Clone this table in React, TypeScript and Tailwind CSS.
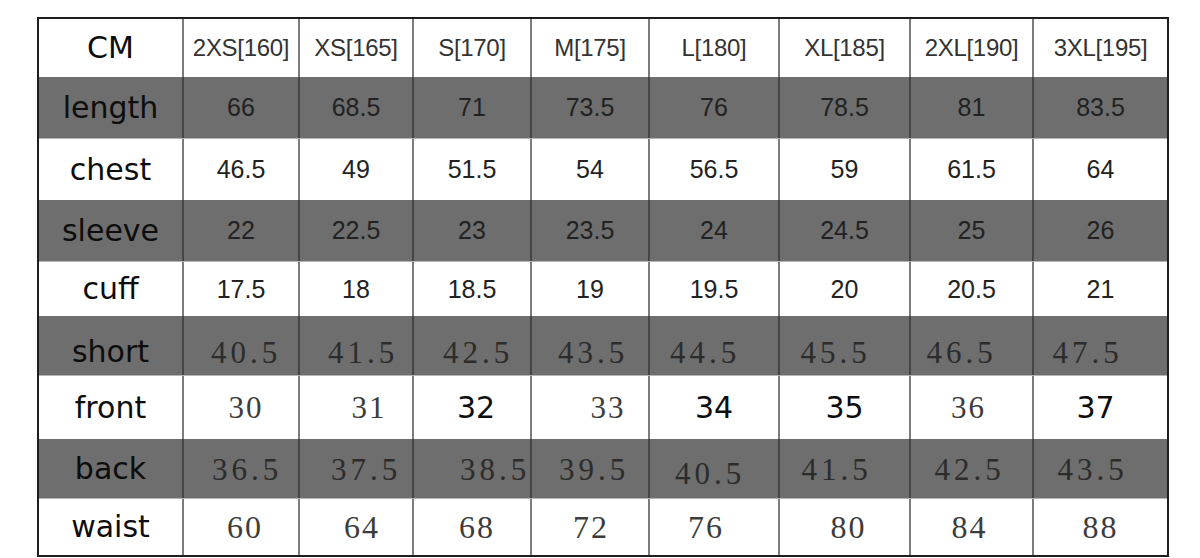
import React from "react";

type Cell = { t: string; c: string };
type Row = { label: string; dark: boolean; h: string; lc?: string; cells: Cell[] };

const HEAD = "font-['Liberation_Sans',Arial,sans-serif] text-[24px] tracking-[-0.3px] text-[#333333]";
const NUM = "font-['Liberation_Sans',Arial,sans-serif] text-[25px] text-[#222222]";
const SERD = "font-['Liberation_Serif','Times_New_Roman',serif] text-[31px] tracking-[4px]";
const SERI = "font-['Liberation_Serif','Times_New_Roman',serif] text-[31px] tracking-[2px] text-[#3c3c3c]";
const SERW = "font-['Liberation_Serif','Times_New_Roman',serif] text-[32px] tracking-[2px] text-[#3c3c3c]";
const DV = "font-['DejaVu_Sans',Verdana,sans-serif] text-[30px] text-[#0d0d0d]";

const rows: Row[] = [
  {
    label: "CM",
    dark: false,
    h: "h-[58px]",
    cells: ["2XS[160]", "XS[165]", "S[170]", "M[175]", "L[180]", "XL[185]", "2XL[190]", "3XL[195]"].map((t) => ({ t, c: HEAD })),
  },
  {
    label: "length",
    dark: true,
    h: "h-[61px]",
    cells: ["66", "68.5", "71", "73.5", "76", "78.5", "81", "83.5"].map((t) => ({ t, c: NUM })),
  },
  {
    label: "chest",
    dark: false,
    h: "h-[62px]",
    cells: ["46.5", "49", "51.5", "54", "56.5", "59", "61.5", "64"].map((t) => ({ t, c: NUM })),
  },
  {
    label: "sleeve",
    dark: true,
    h: "h-[61px]",
    cells: ["22", "22.5", "23", "23.5", "24", "24.5", "25", "26"].map((t) => ({ t, c: NUM })),
  },
  {
    label: "cuff",
    dark: false,
    h: "h-[55px]",
    cells: ["17.5", "18", "18.5", "19", "19.5", "20", "20.5", "21"].map((t) => ({ t, c: NUM })),
  },
  {
    label: "short",
    dark: true,
    h: "h-[59px]",
    lc: "pt-[12px]",
    cells: [
      { t: "40.5", c: `${SERD} text-[#2c2c2c] pl-[10px] pt-[14px]` },
      { t: "41.5", c: `${SERD} text-[#2c2c2c] pl-[14px] pt-[14px]` },
      { t: "42.5", c: `${SERD} text-[#2c2c2c] pl-[12px] pt-[14px]` },
      { t: "43.5", c: `${SERD} text-[#2c2c2c] pl-[6px] pt-[14px]` },
      { t: "44.5", c: `${SERD} text-[#2c2c2c] pr-[18px] pt-[14px]` },
      { t: "45.5", c: `${SERD} text-[#2c2c2c] pr-[18px] pt-[14px]` },
      { t: "46.5", c: `${SERD} text-[#2c2c2c] pr-[20px] pt-[14px]` },
      { t: "47.5", c: `${SERD} text-[#2c2c2c] pr-[26px] pt-[14px]` },
    ],
  },
  {
    label: "front",
    dark: false,
    h: "h-[64px]",
    cells: [
      { t: "30", c: `${SERI} pl-[10px]` },
      { t: "31", c: `${SERI} pl-[26px]` },
      { t: "32", c: `${DV} pl-[8px]` },
      { t: "33", c: `${SERI} pl-[36px]` },
      { t: "34", c: `${DV}` },
      { t: "35", c: `${DV}` },
      { t: "36", c: `${SERI} pr-[6px]` },
      { t: "37", c: `${DV} pr-[10px]` },
    ],
  },
  {
    label: "back",
    dark: true,
    h: "h-[59px]",
    cells: [
      { t: "36.5", c: `${SERD} text-[#2c2c2c] pl-[12px] pt-[2px]` },
      { t: "37.5", c: `${SERD} text-[#2c2c2c] pl-[20px] pt-[2px]` },
      { t: "38.5", c: `${SERD} text-[#2c2c2c] pl-[46px] pt-[2px]` },
      { t: "39.5", c: `${SERD} text-[#2c2c2c] pl-[8px] pt-[2px]` },
      { t: "40.5", c: `${SERD} text-[#2c2c2c] pr-[8px] pt-[10px]` },
      { t: "41.5", c: `${SERD} text-[#2c2c2c] pr-[16px] pt-[2px]` },
      { t: "42.5", c: `${SERD} text-[#2c2c2c] pr-[4px] pt-[2px]` },
      { t: "43.5", c: `${SERD} text-[#2c2c2c] pr-[16px] pt-[2px]` },
    ],
  },
  {
    label: "waist",
    dark: false,
    h: "h-[57px]",
    cells: [
      { t: "60", c: `${SERW} pl-[8px]` },
      { t: "64", c: `${SERW} pl-[12px]` },
      { t: "68", c: `${SERW} pl-[10px]` },
      { t: "72", c: `${SERW} pl-[2px]` },
      { t: "76", c: `${SERW} pr-[16px]` },
      { t: "80", c: `${SERW} pl-[8px]` },
      { t: "84", c: `${SERW} pr-[4px]` },
      { t: "88", c: `${SERW}` },
    ],
  },
];

export default function App() {
  return (
    <div className="w-[1200px] h-[558px] bg-white pt-[17px] pl-[37px] overflow-hidden">
      <div className="w-[1132px] border-2 border-[#1e1e1e] bg-white">
        {rows.map((r, ri) => (
          <div
            key={ri}
            className={`grid grid-cols-[145px_116px_114px_118px_118px_130px_131px_123px_133px] ${r.h} ${
              r.dark ? "bg-[#6e6e6e]" : "bg-white"
            } ${ri > 0 && !r.dark ? "border-t border-[#b5b5b5]" : ""}`}
          >
            <div
              className={`flex items-center justify-center border-r-2 ${
                r.dark ? "border-[#454545]" : "border-[#7c7c7c]"
              } font-['DejaVu_Sans',Verdana,sans-serif] text-[30px] leading-none text-[#0d0d0d] ${r.lc ?? ""}`}
            >
              {r.label}
            </div>
            {r.cells.map((c, ci) => (
              <div
                key={ci}
                className={`flex items-center justify-center leading-none whitespace-nowrap ${
                  ci < 7 ? (r.dark ? "border-r-2 border-[#454545]" : "border-r-2 border-[#7c7c7c]") : ""
                } ${c.c}`}
              >
                {c.t}
              </div>
            ))}
          </div>
        ))}
      </div>
    </div>
  );
}
